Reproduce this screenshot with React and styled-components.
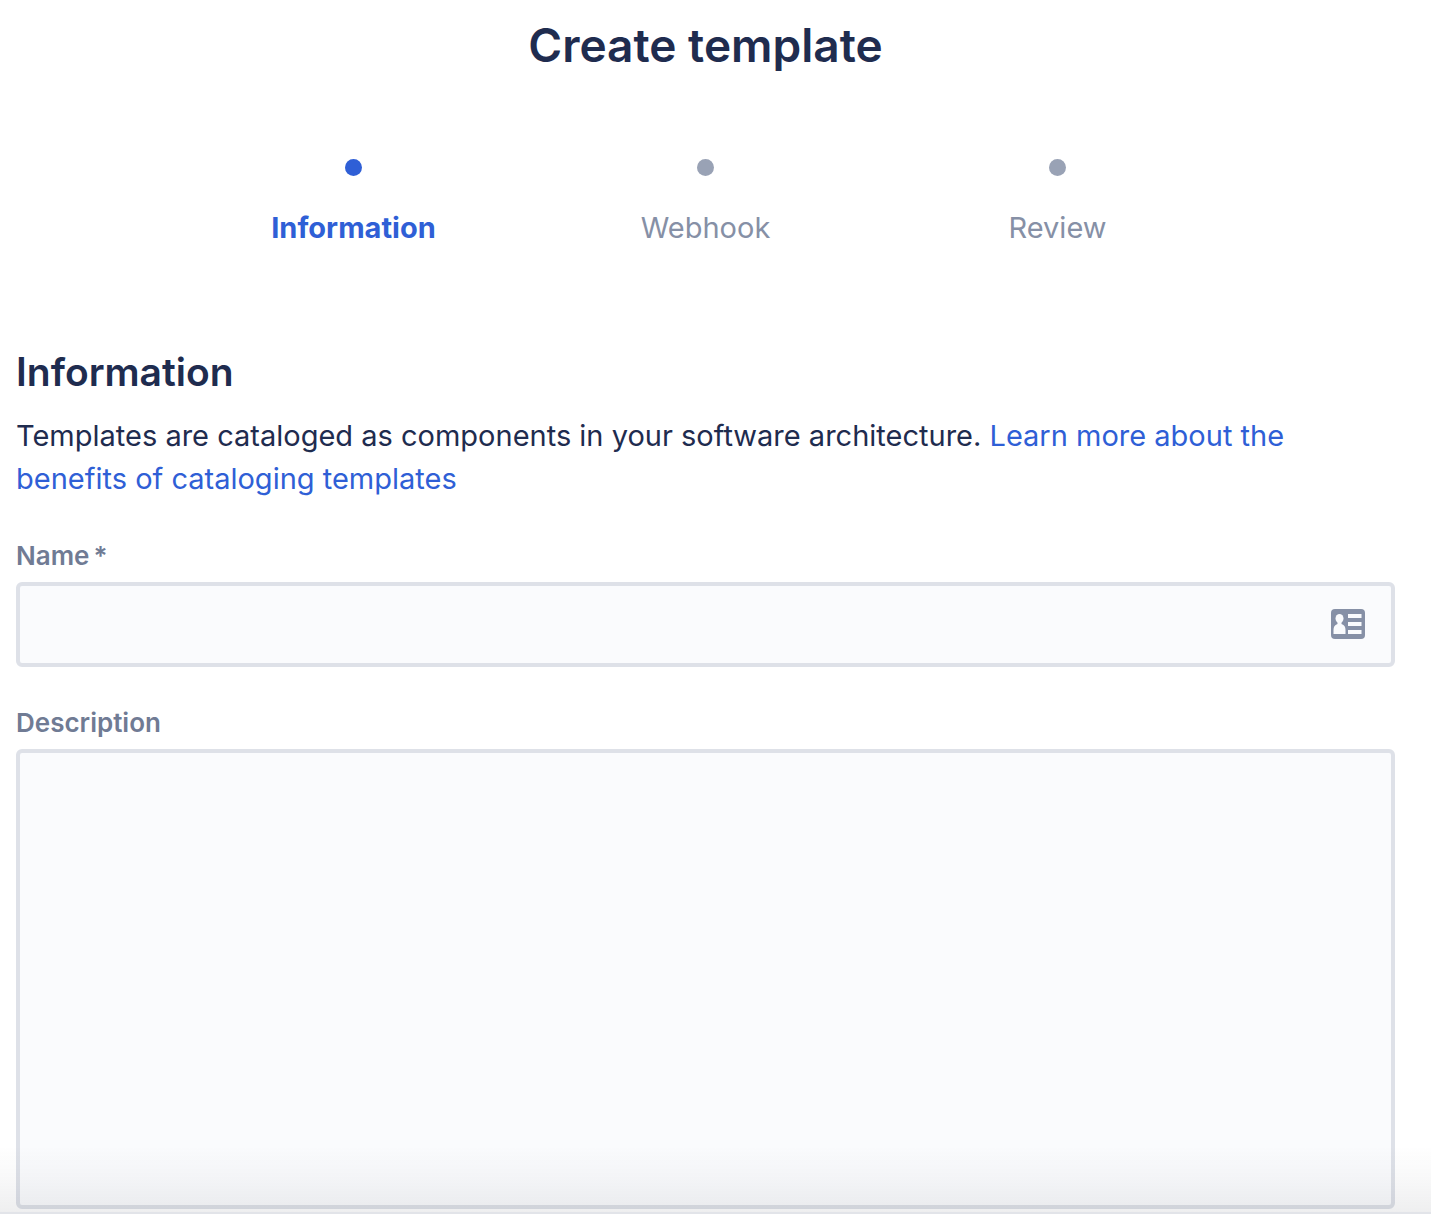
import React from "react";
import styled, { createGlobalStyle } from "styled-components";

const GlobalStyle = createGlobalStyle`
  *, *::before, *::after { box-sizing: border-box; }
  html { min-height: 100%; background: #fff; }
  body {
    margin: 0;
    font-family: Inter, "Liberation Sans", sans-serif;
    color: #1f2c4f;
  }
`;

const Page = styled.main`
  padding: 15px 36px 5px 16px;
`;

const Title = styled.h1`
  margin: 0;
  font-size: 46px;
  line-height: 60px;
  font-weight: 600;
  text-align: center;
`;

const Steps = styled.ol`
  display: grid;
  grid-template-columns: repeat(3, minmax(0, 352px));
  justify-content: center;
  margin: 84px 0 0;
  padding: 0;
  list-style: none;
`;

const Step = styled.li`
  display: flex;
  flex-direction: column;
  align-items: center;
  gap: 34px;
  font-size: 29px;
  line-height: 36px;
  font-weight: ${(p) => (p.$active ? 700 : 400)};
  color: ${(p) => (p.$active ? "#2f5fd6" : "#8690a6")};
`;

const Dot = styled.span`
  width: 17px;
  height: 17px;
  border-radius: 50%;
  background: ${(p) => (p.$active ? "#2f5fd6" : "#99a2b5")};
`;

const Heading = styled.h2`
  margin: 102px 0 0;
  font-size: 39px;
  line-height: 48px;
  font-weight: 600;
`;

const Intro = styled.p`
  margin: 18px 0 0;
  font-size: 29px;
  line-height: 43px;
`;

const Link = styled.a`
  color: #2f5fd6;
  text-decoration: none;
`;

const Field = styled.div`
  display: flex;
  flex-direction: column;
  margin-top: 40px;
`;

const Label = styled.label`
  margin-bottom: 10px;
  font-size: 26px;
  line-height: 32px;
  font-weight: 600;
  color: #707b94;
`;

const Required = styled.span`
  margin-left: 4px;
`;

const InputWrap = styled.div`
  position: relative;
  display: flex;
`;

const TextInput = styled.input`
  width: 100%;
  height: 85px;
  padding: 0 80px 0 16px;
  border: 4px solid #dee1e8;
  border-radius: 6px;
  background: #fafbfd;
  color: inherit;
  font: inherit;
  font-size: 29px;
`;

const TextArea = styled.textarea`
  display: block;
  width: 100%;
  height: 460px;
  padding: 16px;
  border: 4px solid #dee1e8;
  border-radius: 6px;
  background: #fafbfd;
  color: inherit;
  font: inherit;
  font-size: 29px;
  resize: none;
`;

const CardIcon = styled.svg`
  position: absolute;
  top: 27px;
  right: 30px;
  width: 34px;
  height: 30px;
`;

const BottomFade = styled.div`
  position: fixed;
  right: 0;
  bottom: 0;
  left: 0;
  height: 68px;
  background: linear-gradient(to bottom, rgba(40, 44, 56, 0), rgba(40, 44, 56, 0.03) 50%, rgba(40, 44, 56, 0.08));
  border-bottom: 2px solid #e2e4e9;
  pointer-events: none;
`;

const steps = ["Information", "Webhook", "Review"];

export default function App() {
  return (
    <>
      <GlobalStyle />
      <Page>
        <Title>Create template</Title>
        <Steps>
          {steps.map((name, i) => (
            <Step key={name} $active={i === 0} aria-current={i === 0 ? "step" : undefined}>
              <Dot $active={i === 0} />
              {name}
            </Step>
          ))}
        </Steps>
        <Heading>Information</Heading>
        <Intro>
          Templates are cataloged as components in your software architecture.{" "}
          <Link href="#benefits">Learn more about the benefits of cataloging templates</Link>
        </Intro>
        <Field>
          <Label htmlFor="name">
            Name<Required>*</Required>
          </Label>
          <InputWrap>
            <TextInput id="name" required />
            <CardIcon viewBox="0 0 34 30" aria-hidden="true">
              <rect width="34" height="30" rx="4" fill="#8690a6" />
              <ellipse cx="8.5" cy="9.5" rx="4" ry="4.5" fill="#fafbfd" />
              <path d="M6.5 12h4v3c3 1 4 3 4 6v4H2.500v-4c0-3 1-5 4-6z" fill="#fafbfd" />
              <path d="M17 5h13.500v4H17zM17 13h13.500v4H17zM17 21h13.500v4H17z" fill="#fafbfd" />
            </CardIcon>
          </InputWrap>
        </Field>
        <Field>
          <Label htmlFor="description">Description</Label>
          <TextArea id="description" />
        </Field>
      </Page>
      <BottomFade />
    </>
  );
}
